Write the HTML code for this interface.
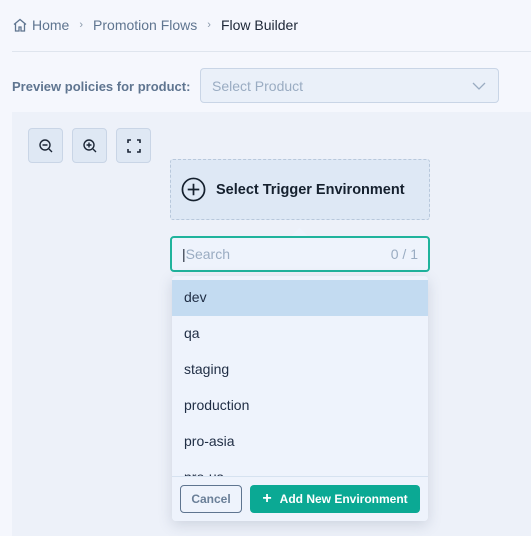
<!DOCTYPE html>
<html><head><style>
*{box-sizing:border-box;margin:0;padding:0}
body{width:531px;height:536px;overflow:hidden;background:#f5f7fd;font-family:"Liberation Sans",sans-serif;position:relative;color:#1c2636}
.abs{position:absolute}
.bc{top:16px;left:12px;font-size:14px;color:#5f7590;display:flex;align-items:center;height:18px}
.bc .sep{margin:0 10px;font-size:11px;color:#8898aa}
.hr{top:51px;left:12px;right:0;height:1px;background:#dfe5ee}
.lbl{top:79px;left:12px;font-size:13px;font-weight:bold;color:#5f7590;white-space:nowrap}
.sel{left:200px;top:68px;width:299px;height:35px;border:1px solid #c9d5e6;border-radius:4px;background:#eaf0f9;font-size:14px;color:#9aacc2;padding:9px 11px}
.canvas{left:12px;top:112px;right:0;bottom:0;background:#edf1f9}
.btn{top:128px;width:35px;height:35px;border:1px solid #c9d5e6;border-radius:4px;background:#dfe8f4;display:flex;align-items:center;justify-content:center}
.trig{left:170px;top:159px;width:260px;height:61px;border:1px dashed #b8c8dc;border-radius:3px;background:#dee8f5;display:flex;align-items:center;padding-left:10px;font-weight:bold;font-size:14.5px;color:#15202e;white-space:nowrap}
.search{left:170px;top:236px;width:260px;height:36px;border:2px solid #1fb39c;border-radius:4px;background:#eef3fc;font-size:14px;color:#9aacc2;padding:8px 10px;display:flex;justify-content:space-between}
.dd{left:172px;top:276px;width:256px;height:245px;background:#eef3fc;border-radius:4px;box-shadow:0 4px 14px rgba(60,80,110,.18);overflow:hidden}
.it{height:36px;font-size:14px;padding:0 12px;line-height:34px;color:#1f2d44}
.ft{position:absolute;left:0;right:0;top:200px;bottom:0;border-top:1px solid #d6e2f0;background:#eef3fc}
</style></head><body>
<div class="abs bc"><svg width="16" height="16" viewBox="0 0 16 16" style="margin-right:4px"><path d="M2 7.5L8 2.5l6 5M3.5 6.5V14h3.5v-4h2v4h3.5V6.5" fill="none" stroke="#5f7590" stroke-width="1.3"/></svg>Home<span class="sep">›</span>Promotion Flows<span class="sep">›</span><span style="color:#1c2636">Flow Builder</span></div>
<div class="abs hr"></div>
<div class="abs lbl">Preview policies for product:</div>
<div class="abs sel">Select Product<svg class="abs" style="right:12px;top:12px" width="14" height="10" viewBox="0 0 14 10"><path d="M1 2l6 6 6-6" fill="none" stroke="#9aacc2" stroke-width="1.3"/></svg></div>
<div class="abs canvas"></div>
<div class="abs btn" style="left:28px"><svg width="16" height="16" viewBox="0 0 16 16" fill="none" stroke="#1c2636" stroke-width="1.4"><circle cx="7" cy="7" r="5"/><path d="M11 11l3 3M4.5 7h5"/></svg></div>
<div class="abs btn" style="left:72px"><svg width="16" height="16" viewBox="0 0 16 16" fill="none" stroke="#1c2636" stroke-width="1.4"><circle cx="7" cy="7" r="5"/><path d="M11 11l3 3M4.5 7h5M7 4.5v5"/></svg></div>
<div class="abs btn" style="left:116px"><svg width="16" height="16" viewBox="0 0 16 16" fill="none" stroke="#1c2636" stroke-width="1.6"><path d="M2 5V2h3M11 2h3v3M14 11v3h-3M5 14H2v-3"/></svg></div>
<div class="abs trig"><svg width="25" height="25" viewBox="0 0 26 26" style="margin-right:10px" fill="none" stroke="#15202e" stroke-width="1.8"><circle cx="13" cy="13" r="11.5"/><path d="M13 7v12M7 13h12"/></svg>Select Trigger Environment</div>
<div class="abs" style="left:294px;top:230px;width:11px;height:11px;background:#eef3fc;transform:rotate(45deg)"></div>
<div class="abs search"><span><span style="color:#1c2636">|</span>Search</span><span>0 / 1</span></div>
<div class="abs dd">
<div style="height:4px"></div>
<div class="it" style="background:#c3dbf1">dev</div>
<div class="it">qa</div>
<div class="it">staging</div>
<div class="it">production</div>
<div class="it">pro-asia</div>
<div class="it">pro-us</div>
<div class="ft">
<div class="abs" style="left:8px;top:8px;width:62px;height:28px;border:1px solid #5f7590;border-radius:4px;font-size:12px;font-weight:bold;color:#6a7f98;text-align:center;line-height:26px">Cancel</div>
<div class="abs" style="left:78px;top:8px;width:170px;height:28px;background:#0ba994;border-radius:4px;font-size:12px;font-weight:bold;color:#fff;text-align:center;line-height:28px"><span style="font-size:16px;margin-right:8px">+</span>Add New Environment</div>
</div>
</div>
</body></html>
